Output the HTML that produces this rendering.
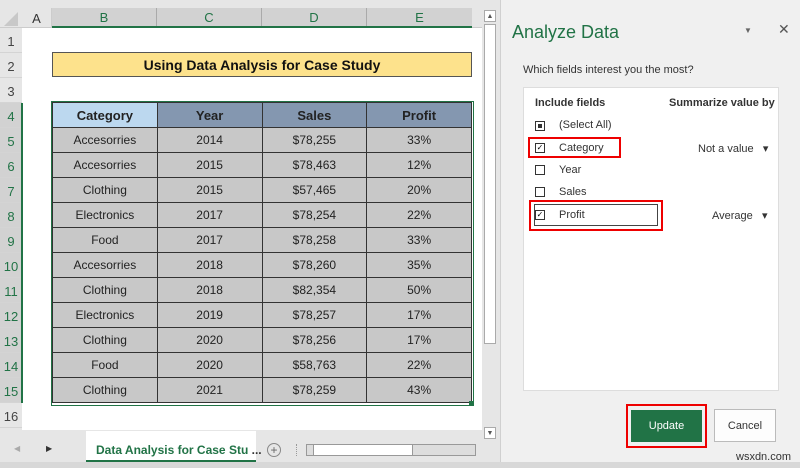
<html><head><style>
*{box-sizing:border-box;margin:0;padding:0}
body{width:800px;height:468px;overflow:hidden;background:#e6e6e6;font-family:"Liberation Sans",sans-serif;position:relative}
.a{position:absolute}
.c{display:flex;align-items:center;justify-content:center}
.rh{left:0;width:22px;height:25px;border-bottom:1px solid #d4d4d4;background:#e6e6e6;font-size:13px;color:#444;padding-top:3px}
.rh.s{color:#217346;background:#d2d2d2}
td{border:1px solid #333;height:25px;text-align:center;font-size:12px;color:#222;background:#c8c8c8;padding:0}
.lbl{font-size:11px;color:#333}
.cb{width:10px;height:10px;border:1px solid #333;background:#fff}
</style></head><body>
<div class="a" style="left:0;top:8px;width:482px;height:20px;background:#e6e6e6;border-bottom:1px solid #ccc"></div>
<div class="a" style="left:4px;top:12px;width:0;height:0;border-left:14px solid transparent;border-bottom:14px solid #c8c8c8"></div>
<div class="a c" style="left:22px;top:8px;width:30px;height:20px;font-size:13px;color:#333;border-right:1px solid #ccc">A</div>
<div class="a" style="left:52px;top:8px;width:420px;height:20px;background:#d2d2d2;border-bottom:2px solid #217346"></div>
<div class="a c" style="left:52px;top:8px;width:105px;height:18px;font-size:13px;color:#217346;border-right:1px solid #aaa">B</div>
<div class="a c" style="left:157px;top:8px;width:105px;height:18px;font-size:13px;color:#217346;border-right:1px solid #aaa">C</div>
<div class="a c" style="left:262px;top:8px;width:105px;height:18px;font-size:13px;color:#217346;border-right:1px solid #aaa">D</div>
<div class="a c" style="left:367px;top:8px;width:105px;height:18px;font-size:13px;color:#217346">E</div>
<div class="a" style="left:22px;top:28px;width:460px;height:402px;background:#fff"></div>
<div class="a rh c" style="top:28px">1</div>
<div class="a rh c" style="top:53px">2</div>
<div class="a rh c" style="top:78px">3</div>
<div class="a rh c s" style="top:103px">4</div>
<div class="a rh c s" style="top:128px">5</div>
<div class="a rh c s" style="top:153px">6</div>
<div class="a rh c s" style="top:178px">7</div>
<div class="a rh c s" style="top:203px">8</div>
<div class="a rh c s" style="top:228px">9</div>
<div class="a rh c s" style="top:253px">10</div>
<div class="a rh c s" style="top:278px">11</div>
<div class="a rh c s" style="top:303px">12</div>
<div class="a rh c s" style="top:328px">13</div>
<div class="a rh c s" style="top:353px">14</div>
<div class="a rh c s" style="top:378px">15</div>
<div class="a rh c" style="top:403px">16</div>
<div class="a" style="left:21px;top:103px;width:2px;height:300px;background:#217346"></div>
<div class="a c" style="left:52px;top:52px;width:420px;height:25px;background:#fde28c;border:1px solid #555;font-weight:bold;font-size:14px;color:#111">Using Data Analysis for Case Study</div>
<div class="a" style="left:51px;top:101px;width:423px;height:305px;border:1px solid #217346"></div>
<table class="a" style="left:52px;top:102px;width:420px;border-collapse:collapse;table-layout:fixed">
<tr><td style="background:#bcd8ef;font-weight:bold;font-size:13px">Category</td><td style="background:#8497b0;font-weight:bold;font-size:13px">Year</td><td style="background:#8497b0;font-weight:bold;font-size:13px">Sales</td><td style="background:#8497b0;font-weight:bold;font-size:13px">Profit</td></tr>
<tr><td>Accesorries</td><td>2014</td><td>$78,255</td><td>33%</td></tr>
<tr><td>Accesorries</td><td>2015</td><td>$78,463</td><td>12%</td></tr>
<tr><td>Clothing</td><td>2015</td><td>$57,465</td><td>20%</td></tr>
<tr><td>Electronics</td><td>2017</td><td>$78,254</td><td>22%</td></tr>
<tr><td>Food</td><td>2017</td><td>$78,258</td><td>33%</td></tr>
<tr><td>Accesorries</td><td>2018</td><td>$78,260</td><td>35%</td></tr>
<tr><td>Clothing</td><td>2018</td><td>$82,354</td><td>50%</td></tr>
<tr><td>Electronics</td><td>2019</td><td>$78,257</td><td>17%</td></tr>
<tr><td>Clothing</td><td>2020</td><td>$78,256</td><td>17%</td></tr>
<tr><td>Food</td><td>2020</td><td>$58,763</td><td>22%</td></tr>
<tr><td>Clothing</td><td>2021</td><td>$78,259</td><td>43%</td></tr>
</table>
<div class="a" style="left:469px;top:401px;width:5px;height:5px;background:#217346"></div>
<div class="a" style="left:482px;top:8px;width:16px;height:432px;background:#e6e6e6"></div>
<div class="a c" style="left:484px;top:10px;width:12px;height:12px;border:1px solid #aaa;background:#fff;font-size:7px;color:#555">▲</div>
<div class="a" style="left:484px;top:24px;width:12px;height:320px;border:1px solid #aaa;background:#fff"></div>
<div class="a c" style="left:484px;top:427px;width:12px;height:12px;border:1px solid #aaa;background:#fff;font-size:7px;color:#555">▼</div>
<div class="a" style="left:0;top:430px;width:482px;height:32px;background:#e6e6e6"></div>
<div class="a" style="left:14px;top:444px;font-size:8px;color:#aaa">◀</div>
<div class="a" style="left:46px;top:444px;font-size:8px;color:#333">▶</div>
<div class="a" style="left:86px;top:431px;width:170px;height:31px;background:#fff;border-bottom:2px solid #217346"></div>
<div class="a" style="left:96px;top:443px;font-size:12px;font-weight:bold;color:#217346">Data Analysis for Case Stu<span style="color:#333">  ...</span></div>
<div class="a c" style="left:267px;top:443px;width:14px;height:14px;border:1px solid #888;border-radius:50%;font-size:12px;color:#666">+</div>
<div class="a" style="left:296px;top:444px;width:10px;height:12px;border-left:1px dotted #999"></div>
<div class="a" style="left:306px;top:444px;width:170px;height:12px;background:#ddd;border:1px solid #999"></div>
<div class="a" style="left:313px;top:444px;width:100px;height:12px;background:#fff;border:1px solid #999"></div>
<div class="a" style="left:0;top:462px;width:800px;height:6px;background:#d8d8d8"></div>
<div class="a" style="left:500px;top:0;width:300px;height:462px;background:#f0f0f0;border-left:1px solid #d0d0d0"></div>
<div class="a" style="left:512px;top:22px;font-size:18px;color:#217346">Analyze Data</div>
<div class="a" style="left:744px;top:26px;font-size:8px;color:#666">▼</div>
<div class="a" style="left:778px;top:21px;font-size:14px;color:#555">✕</div>
<div class="a lbl" style="left:523px;top:64px">Which fields interest you the most?</div>
<div class="a" style="left:523px;top:87px;width:256px;height:304px;background:#fff;border:1px solid #ddd"></div>
<div class="a lbl" style="left:535px;top:97px;font-weight:bold">Include fields</div>
<div class="a lbl" style="left:669px;top:97px;font-weight:bold">Summarize value by</div>
<div class="a cb" style="left:535px;top:121px"><div style="margin:2px;width:4px;height:4px;background:#333"></div></div>
<div class="a lbl" style="left:559px;top:119px">(Select All)</div>
<div class="a cb" style="left:535px;top:143px;font-size:8px;line-height:8px;text-align:center">✓</div>
<div class="a lbl" style="left:559px;top:142px">Category</div>
<div class="a lbl" style="left:698px;top:142px">Not a value &nbsp;&nbsp;▾</div>
<div class="a cb" style="left:535px;top:165px"></div>
<div class="a lbl" style="left:559px;top:164px">Year</div>
<div class="a cb" style="left:535px;top:187px"></div>
<div class="a lbl" style="left:559px;top:186px">Sales</div>
<div class="a cb" style="left:535px;top:210px;font-size:8px;line-height:8px;text-align:center">✓</div>
<div class="a lbl" style="left:559px;top:209px">Profit</div>
<div class="a lbl" style="left:712px;top:209px">Average &nbsp;&nbsp;▾</div>
<div class="a" style="left:528px;top:137px;width:93px;height:21px;border:2px solid #e00"></div>
<div class="a" style="left:529px;top:200px;width:134px;height:31px;border:2px solid #e00"></div>
<div class="a" style="left:534px;top:204px;width:124px;height:22px;border:1px solid #444"></div>
<div class="a" style="left:626px;top:404px;width:81px;height:44px;border:2px solid #e00"></div>
<div class="a c" style="left:631px;top:410px;width:71px;height:32px;background:#217346;color:#fff;font-size:11px">Update</div>
<div class="a c" style="left:714px;top:409px;width:62px;height:33px;background:#fdfdfd;border:1px solid #bbb;color:#333;font-size:11px">Cancel</div>
<div class="a" style="left:736px;top:451px;font-size:11px;color:#333">wsxdn.com</div>
</body></html>
